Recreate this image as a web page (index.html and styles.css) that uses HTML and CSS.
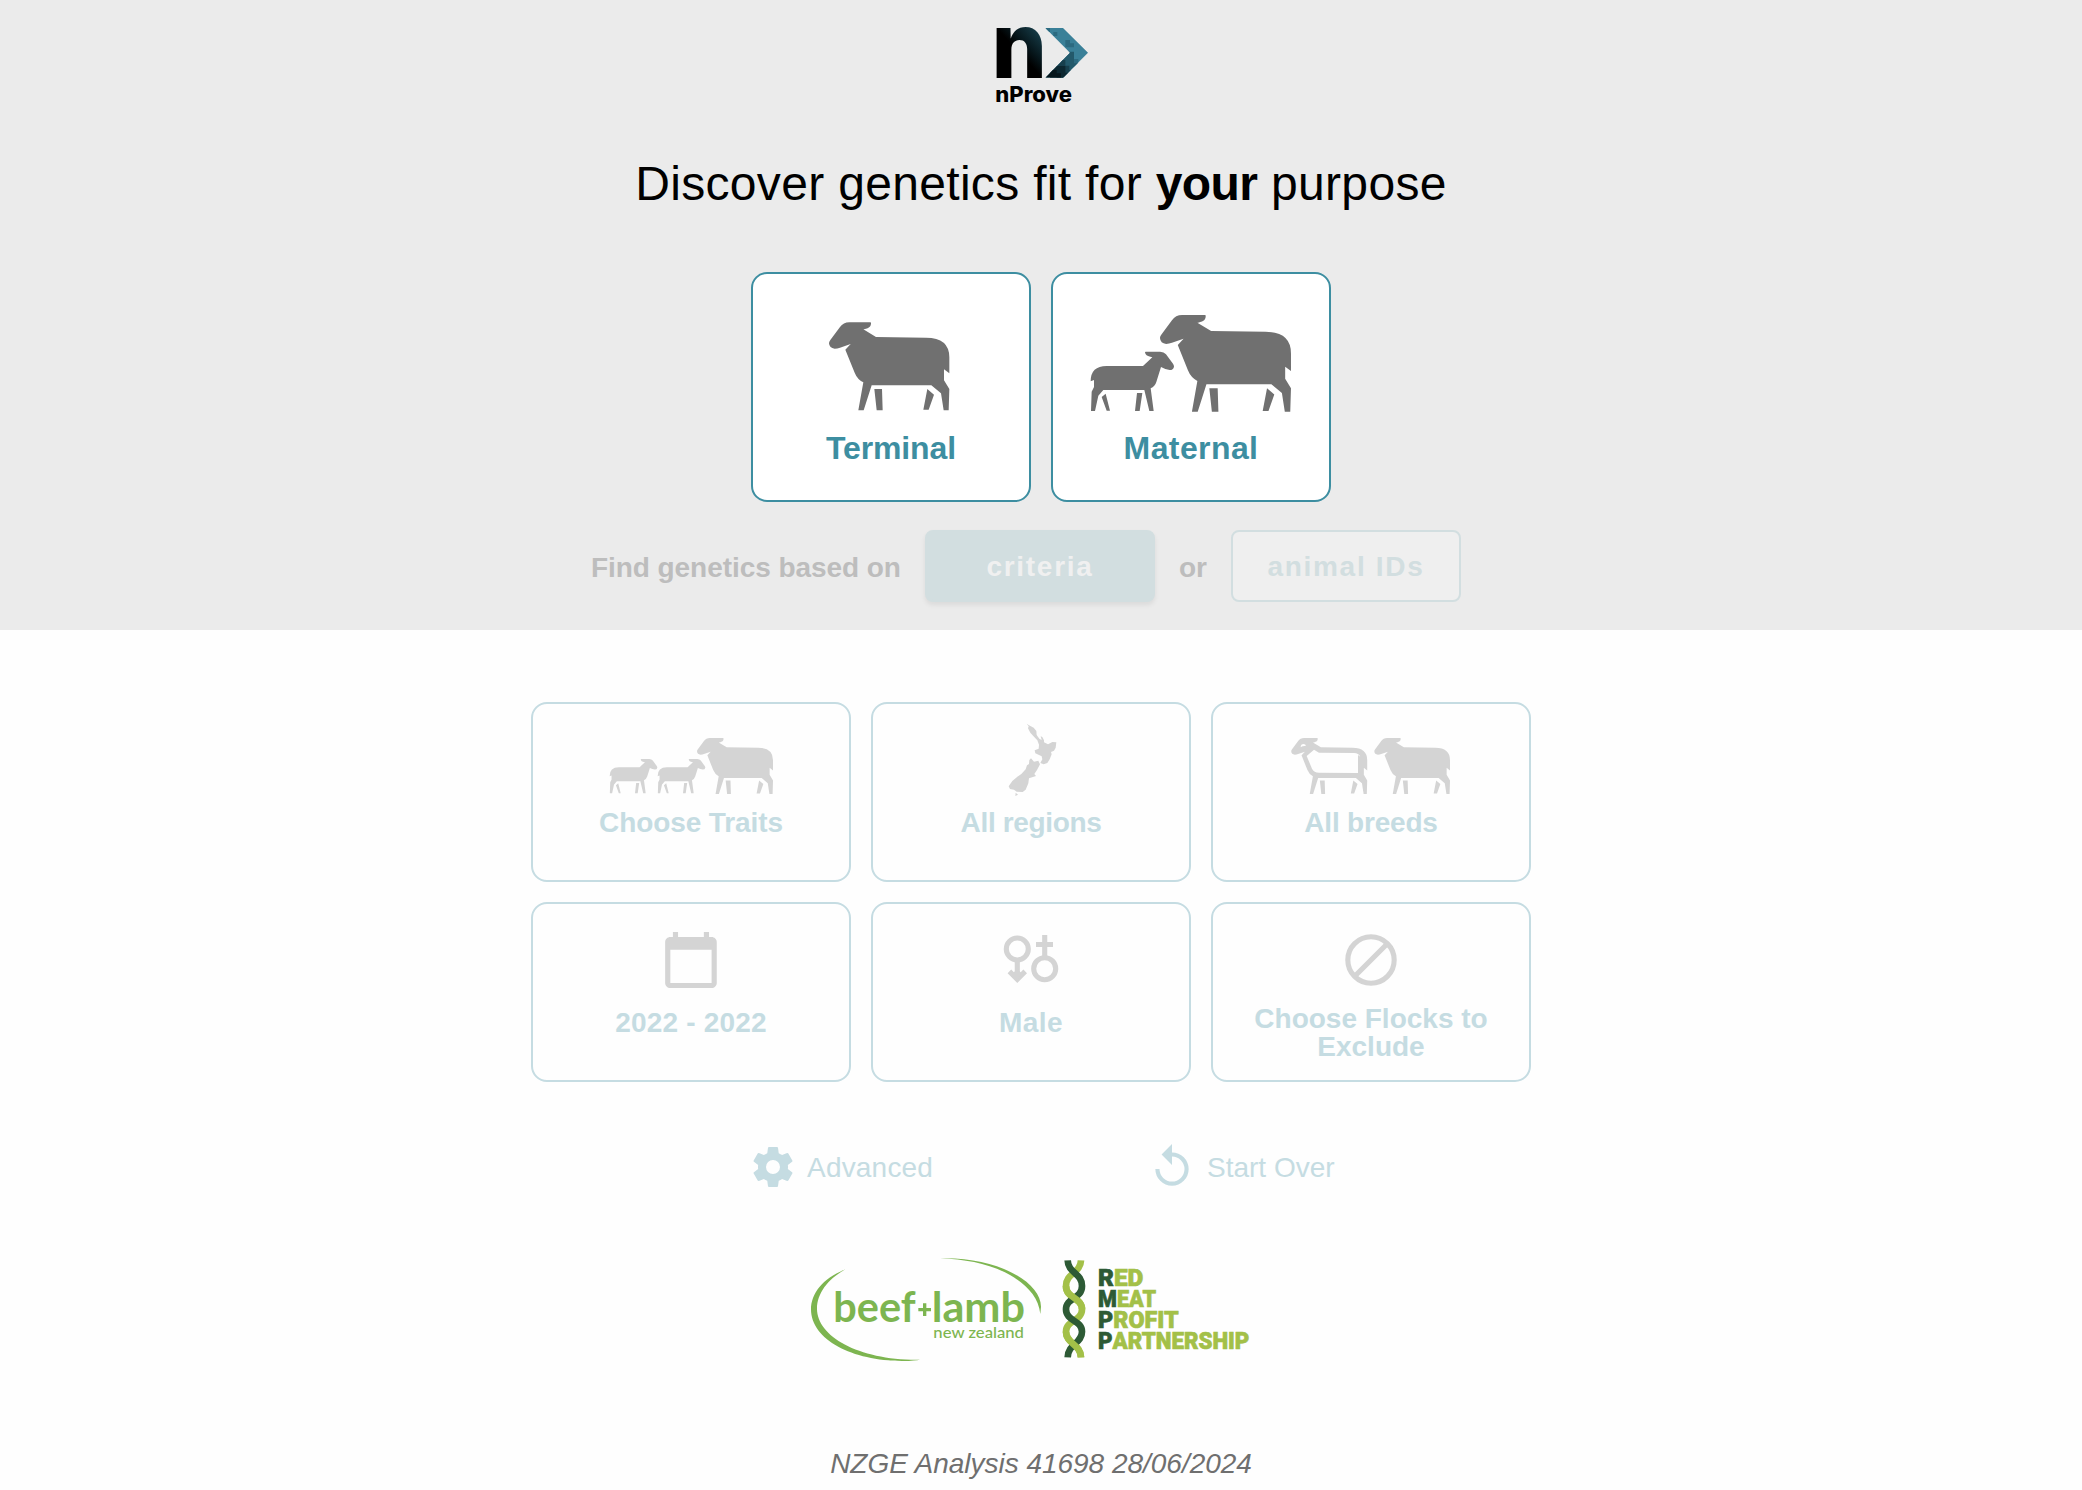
FILE: index.html
```html
<!DOCTYPE html>
<html lang="en">
<head>
<meta charset="utf-8">
<title>nProve</title>
<link rel="stylesheet" href="styles.css">
</head>
<body>
<svg class="defs" aria-hidden="true">
  <symbol id="ewe" overflow="visible">
    <path d="M372 208C390 204 393 198 393 189Q393 187 391 187H328Q310 187 300 201L271 240Q267 245 267 250Q268 265 284 266Q292 266 300 263L332 252L316 269L344 338Q352 358 370 367L355 451H371L395 376H574L603 400L611 451H626L628 387L612 361V328L628 340V292Q628 233 558 233L408 231L370 208Z"/>
    <path d="M403 387H426L428 451H410ZM562 387L582 404L566 449H550Z"/>
  </symbol>
  <symbol id="lamb" overflow="visible">
    <path d="M337 292C320 289 316 283 315 277Q315 275 317 275H360Q372 275 378 283L399 311Q402 315 402 320Q400 330 389 330Q376 328 363 321L349 366Q345 379 332 385L341 453H328L313 390H190L175 407L165 453H153L155 395L162 381V360L152 364Q152 318 200 318H309L337 292Z"/>
    <path d="M185 411L197 401L210 452H200ZM291 399H307L299 453H285Z"/>
  </symbol>
</svg>

<header class="hero">
  <svg class="logo" viewBox="90 30 306 270" role="img" aria-label="nProve">
    <defs>
      <linearGradient id="nFill" gradientUnits="userSpaceOnUse" x1="175" y1="125" x2="240" y2="65">
        <stop offset="0" stop-color="#000"/><stop offset=".35" stop-color="#06161b"/><stop offset="1" stop-color="#173d49"/>
      </linearGradient>
      <clipPath id="arrowClip"><path d="M256 54H309L384 128L309 203H256L330 128Z"/></clipPath>
    </defs>
    <text class="logo-n" x="95" y="203" textLength="165" lengthAdjust="spacingAndGlyphs" fill="url(#nFill)">n</text>
    <g clip-path="url(#arrowClip)">
      <path fill="#3a8098" d="M250 50H390V210H250Z"/>
      <path fill="#2c6a80" d="M256 54H270V66H292V78H280V66H256ZM316 90H330V100H342V112H316ZM340 147H355V172H330V147Z"/>
      <path fill="#23596b" d="M302 125H342V160H355V170H342V210H302Z"/>
      <path fill="#173f4d" d="M290 150H316V167H328V180H342V210H290Z"/>
      <path fill="#0c2731" d="M270 168H316V188H328V210H270Z"/>
      <path fill="#06161c" d="M250 180H290V190H303V210H250Z"/>
    </g>
    <text class="logo-name" x="106" y="276" textLength="230" lengthAdjust="spacingAndGlyphs">nProve</text>
  </svg>

  <h1 class="headline">Discover genetics fit for <b>your</b> purpose</h1>

  <div class="goals">
    <button class="card goal">
      <svg class="goal-icon" viewBox="39 42 828 450"><use href="#ewe"/></svg>
      <span class="goal-label l-terminal">Terminal</span>
    </button>
    <button class="card goal">
      <svg class="goal-icon" viewBox="39 42 828 450">
        <use href="#ewe" transform="translate(69.3 -40.4) scale(1.0886 1.0985)"/>
        <use href="#lamb"/>
      </svg>
      <span class="goal-label l-maternal">Maternal</span>
    </button>
  </div>

  <div class="basis">
    <span class="basis-text lead">Find genetics based on</span>
    <button class="btn btn-filled">criteria</button>
    <span class="basis-text">or</span>
    <button class="btn btn-outline">animal IDs</button>
  </div>
</header>

<main>
  <div class="filters">
    <button class="card filter">
      <svg class="filter-icon" viewBox="39 42 948 300">
        <use href="#lamb" transform="translate(182 47.8) scale(.572 .579)"/>
        <use href="#lamb" transform="translate(326 47.8) scale(.572 .579)"/>
        <use href="#ewe" transform="translate(362.4 25) scale(.6316 .636)"/>
      </svg>
      <span class="filter-label l-traits">Choose Traits</span>
    </button>
    <button class="card filter">
      <svg class="filter-icon" viewBox="39 42 948 300">
        <path d="M500 101L507 106L521 113L529 123L530 135L538 146L545 150L542 139L547 141L552 151L552 157L564 163L577 156L589 157L587 173L582 182L573 186L575 193L569 208L562 219L551 223L541 219L547 208L545 199L526 190L524 181L536 176L537 164L532 151L522 140L511 128L504 115L506 109Z"/>
        <path d="M513 205L522 215L535 212L540 223L531 240L523 252L528 258L507 265L505 280L497 299L488 306L470 305L462 299L450 297L446 289L457 273L472 260L484 252L497 238L501 226L507 222L508 210ZM467 308L474 314L466 318Z"/>
      </svg>
      <span class="filter-label l-regions">All regions</span>
    </button>
    <button class="card filter">
      <svg class="filter-icon" viewBox="39 42 948 300">
        <use href="#ewe" transform="translate(105 25) scale(.6316 .636)"/>
        <path class="fleece" d="M342 179L357 188L462 189Q476 190 481 200L474 195V249L357 248Q342 248 336 236L320 198ZM302 172Q302 162 311 162Q318 163 317 168Q308 167 302 172Z"/>
        <use href="#ewe" transform="translate(355 25) scale(.629 .636)"/>
      </svg>
      <span class="filter-label l-breeds">All breeds</span>
    </button>
    <button class="card filter">
      <svg class="filter-icon" viewBox="0 0 316 100">
        <path transform="translate(127 25.4) scale(2.58 2.55)" d="M20 3h-1V1h-2v2H7V1H5v2H4c-1.1 0-2 .9-2 2v16c0 1.1.9 2 2 2h16c1.1 0 2-.9 2-2V5c0-1.1-.9-2-2-2zm0 18H4V8h16v13z"/>
      </svg>
      <span class="filter-label l-years">2022 - 2022</span>
    </button>
    <button class="card filter">
      <svg class="filter-icon" viewBox="873 904 316 100">
        <g class="line">
          <circle cx="1017.3" cy="949" r="11"/>
          <circle cx="1044.7" cy="968.7" r="11"/>
          <path d="M1017.3 960V979M1009.4 971.4L1017.3 979.3L1025.2 971.4M1044.7 958V935M1036 944.5H1053"/>
        </g>
        <path d="M1012 974L1017.3 969L1022.5 974L1017.3 979Z"/>
      </svg>
      <span class="filter-label l-sex">Male</span>
    </button>
    <button class="card filter">
      <svg class="filter-icon" viewBox="0 0 316 100">
        <g class="line"><circle cx="158" cy="56" r="23.2"/><path d="M142 72L174 40"/></g>
      </svg>
      <span class="filter-label l-flocks">Choose Flocks to Exclude</span>
    </button>
  </div>

  <div class="actions">
    <a class="action">
      <svg class="gear" viewBox="0 0 24 24"><path d="M12,15.5A3.5,3.5 0 0,1 8.5,12A3.5,3.5 0 0,1 12,8.5A3.5,3.5 0 0,1 15.5,12A3.5,3.5 0 0,1 12,15.5M19.43,12.97C19.47,12.65 19.5,12.33 19.5,12C19.5,11.67 19.47,11.34 19.43,11L21.54,9.37C21.73,9.22 21.78,8.95 21.66,8.73L19.66,5.27C19.54,5.05 19.27,4.96 19.05,5.05L16.56,6.05C16.04,5.66 15.5,5.32 14.87,5.07L14.5,2.42C14.46,2.18 14.25,2 14,2H10C9.75,2 9.54,2.18 9.5,2.42L9.13,5.07C8.5,5.32 7.96,5.66 7.44,6.05L4.95,5.05C4.73,4.96 4.46,5.05 4.34,5.27L2.34,8.73C2.21,8.95 2.27,9.22 2.46,9.37L4.57,11C4.53,11.34 4.5,11.67 4.5,12C4.5,12.33 4.53,12.65 4.57,12.97L2.46,14.63C2.27,14.78 2.21,15.05 2.34,15.27L4.34,18.73C4.46,18.95 4.73,19.03 4.95,18.95L7.44,17.94C7.96,18.34 8.5,18.68 9.13,18.93L9.5,21.58C9.54,21.82 9.75,22 10,22H14C14.25,22 14.46,21.82 14.5,21.58L14.87,18.93C15.5,18.67 16.04,18.34 16.56,17.94L19.05,18.95C19.27,19.03 19.54,18.95 19.66,18.73L21.66,15.27C21.78,15.05 21.73,14.78 21.54,14.63L19.43,12.97Z"/></svg>
      <span class="l-advanced">Advanced</span>
    </a>
    <a class="action">
      <svg class="replay" viewBox="0 0 24 24"><path d="M12,5V1L7,6L12,11V7A6,6 0 0,1 18,13A6,6 0 0,1 12,19A6,6 0 0,1 6,13H4A8,8 0 0,0 12,21A8,8 0 0,0 20,13A8,8 0 0,0 12,5Z"/></svg>
      <span class="l-restart">Start Over</span>
    </a>
  </div>
</main>

<footer class="footer">
  <svg class="partners" viewBox="30 48 1326 318">
    <g class="blnz">
      <path d="M137 88C70 113 33 160 33 208C33 300 160 364 310 363Q345 362 360 359C180 362 51 290 51 206C51 160 85 115 137 88Z"/>
      <path d="M420 55C590 50 722 125 723 200L721 222C715 170 680 135 630 105C570 72 500 58 420 55Z"/>
      <text class="blnz-name" x="100" y="247" textLength="247" lengthAdjust="spacingAndGlyphs">beef</text>
      <path d="M369 190H379V204H393V214H379V228H369V214H355V204H369Z"/>
      <text class="blnz-name" x="395" y="247" textLength="280" lengthAdjust="spacingAndGlyphs">lamb</text>
      <text class="blnz-sub" x="400" y="293" textLength="272" lengthAdjust="spacingAndGlyphs">new zealand</text>
    </g>
    <g class="helix">
      <path class="light" d="M843 61C842 100 798 98 798 138S846 172 846 208S798 240 798 275S842 312 843 352"/>
      <path class="dark" d="M803 61C804 100 846 98 846 138S798 172 798 208S846 240 846 275S804 312 803 352"/>
      <path class="light" d="M798 138C798 175 846 172 846 208M798 275C798 312 842 312 843 352"/>
    </g>
    <g class="rmpp">
      <text x="894" y="138" textLength="136" lengthAdjust="spacingAndGlyphs"><tspan>R</tspan>ED</text>
      <text x="894" y="201" textLength="174" lengthAdjust="spacingAndGlyphs"><tspan>M</tspan>EAT</text>
      <text x="894" y="264" textLength="242" lengthAdjust="spacingAndGlyphs"><tspan>P</tspan>ROFIT</text>
      <text x="894" y="326" textLength="454" lengthAdjust="spacingAndGlyphs"><tspan>P</tspan>ARTNERSHIP</text>
    </g>
  </svg>
  <p class="analysis">NZGE Analysis 41698 28/06/2024</p>
</footer>
</body>
</html>
```

FILE: styles.css
```css
* { box-sizing: border-box; }

body {
  margin: 0;
  min-height: 1490px;
  background: #fefefe;
  color: #000;
  font-family: "Liberation Sans", Arial, sans-serif;
  overflow: hidden;
}

button { font: inherit; margin: 0; padding: 0; }
svg { display: block; overflow: visible; }
.defs { width: 0; height: 0; position: absolute; }

.hero {
  height: 630px;
  padding-top: 20px;
  background: #ebebeb;
  display: flex;
  flex-direction: column;
  align-items: center;
}

.logo { width: 102px; height: 90px; }
.logo-n { font: 800 276px Inter, sans-serif; }
.logo-name { font: 800 63px Inter, sans-serif; }

.headline {
  margin: 46px 0 0;
  font-size: 48px;
  font-weight: 400;
  line-height: 56px;
  letter-spacing: .32px;
  white-space: nowrap;
}
.headline b { letter-spacing: -.6px; }

.goals { display: flex; gap: 20px; margin-top: 60px; }

.card {
  display: flex;
  flex-direction: column;
  align-items: center;
  border: 2px solid #3d8ea1;
  border-radius: 16px;
  background: #fff;
}

.goal { width: 280px; height: 230px; }
.goal-icon { width: 276px; height: 150px; fill: #707070; }
.goal-label {
  margin-top: 8px;
  color: #3d8ea1;
  font-size: 32px;
  font-weight: 700;
  line-height: 32px;
}
.l-terminal { letter-spacing: -.15px; }
.l-maternal { letter-spacing: .4px; }

.basis {
  display: flex;
  align-items: center;
  gap: 24px;
  margin-top: 28px;
  padding-right: 30px;
}
.basis-text {
  width: 28px;
  padding-top: 3px;
  color: #bdbdbd;
  font-size: 28px;
  font-weight: 700;
  line-height: 34px;
  white-space: nowrap;
}
.lead { width: 310px; letter-spacing: -.06px; }
.btn {
  width: 230px;
  height: 72px;
  padding-top: 1px;
  border: 2px solid #d2dee0;
  border-radius: 8px;
  font-size: 28px;
  font-weight: 700;
  letter-spacing: 1.7px;
}
.btn-filled { background: #d2dee0; color: #f0f0f0; box-shadow: 0 3px 5px rgba(0, 0, 0, .07); }
.btn-outline { background: #efefef; color: #d2dee0; }

.filters {
  display: grid;
  grid-template-columns: repeat(3, 320px);
  grid-auto-rows: 180px;
  gap: 20px;
  justify-content: center;
  margin-top: 72px;
  padding-right: 20px;
}
.filter { border-color: #c5dce2; background: #fefefe; }
.filter-icon { width: 316px; height: 100px; flex: none; fill: #d4d4d4; }
.line { fill: none; stroke: #d4d4d4; stroke-width: 5.1; }
.fleece { fill: #fefefe; }
.filter-label {
  margin-top: 5px;
  width: 260px;
  color: #c5dce2;
  font-size: 28px;
  font-weight: 700;
  line-height: 28px;
  text-align: center;
}
.l-traits { letter-spacing: -.1px; }
.l-regions { letter-spacing: -.35px; }
.l-breeds { letter-spacing: -.2px; }
.l-years { letter-spacing: .2px; }
.l-sex { letter-spacing: .4px; }
.l-flocks { margin-top: 1px; }

.actions {
  display: grid;
  grid-template-columns: 398px 186px;
  justify-content: center;
  margin-top: 60px;
}
.action {
  display: flex;
  align-items: center;
  height: 50px;
  color: #c5dce2;
  fill: #c5dce2;
  font-size: 28px;
  white-space: nowrap;
}
.action span { padding-top: 2px; }
.l-advanced { letter-spacing: .2px; }
.gear { width: 48px; height: 48px; margin-right: 10px; }
.replay { width: 50px; height: 50px; margin-right: 10px; }

.footer {
  display: flex;
  flex-direction: column;
  align-items: center;
  margin-top: 64px;
}
.partners { width: 442px; height: 106px; margin-right: 20px; }
.blnz { fill: #7db550; }
.blnz-name { font: 700 128px Lato, sans-serif; }
.blnz-sub { font: 500 43px Lato, sans-serif; }
.helix { fill: none; stroke-width: 20; }
.light { stroke: #a3c048; }
.dark { stroke: #2d5a35; }
.rmpp { font: 900 70px Roboto, sans-serif; fill: #a3c048; stroke: #a3c048; stroke-width: 2; }
.rmpp tspan { fill: #2d5a35; stroke: #2d5a35; }

.analysis {
  margin: 85px 0 0;
  color: #6f6f6f;
  font-size: 28px;
  font-style: italic;
  line-height: 34px;
  letter-spacing: -.02px;
}
```
